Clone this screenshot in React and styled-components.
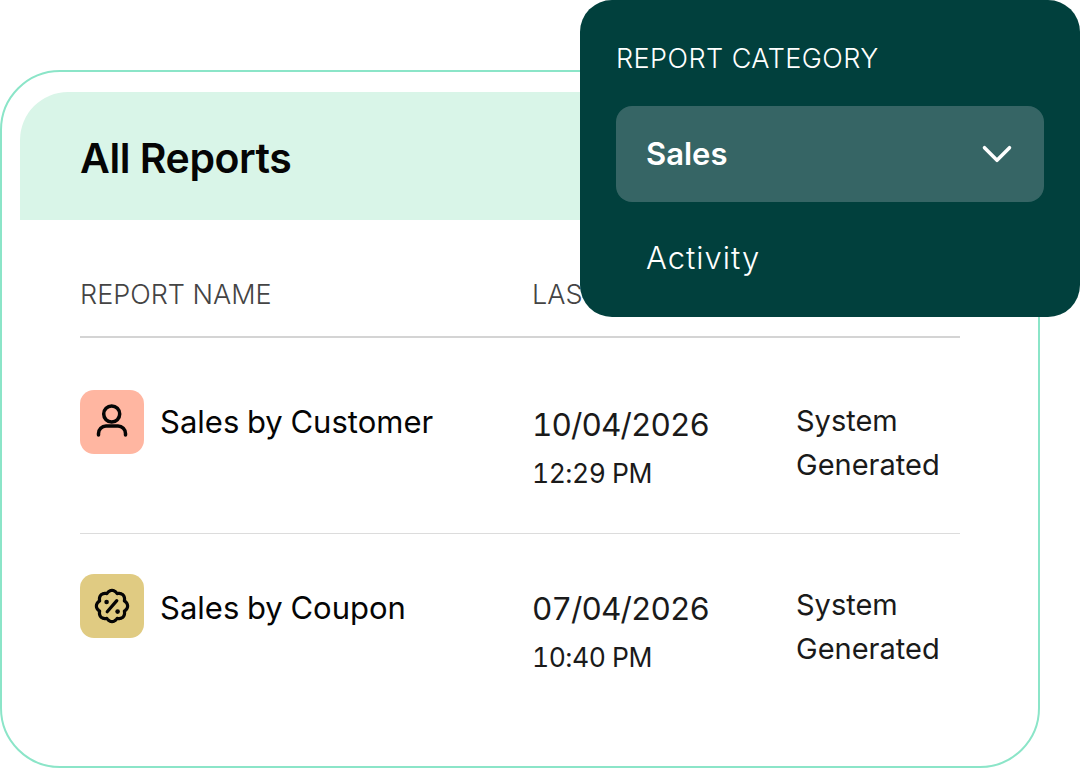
import React from "react";
import styled, { createGlobalStyle } from "styled-components";
import { ChevronDown } from "lucide-react";

const GlobalStyle = createGlobalStyle`
  html, body {
    margin: 0;
    padding: 0;
    background: #fff;
    font-family: Inter, "Open Sans", sans-serif;
    overflow: hidden;
  }
`;

const Page = styled.div`
  position: relative;
  width: 1080px;
  height: 768px;
  padding-top: 70px;
  box-sizing: border-box;
`;
const Card = styled.div`
  width: 1040px;
  height: 698px;
  box-sizing: border-box;
  border: 2px solid #8be5c8;
  border-radius: 60px;
  padding: 20px 18px 0;
`;
const Header = styled.div`
  height: 128px;
  box-sizing: border-box;
  display: flex;
  align-items: center;
  padding: 3px 0 0 60px;
  background: #d9f5e8;
  border-radius: 48px 48px 0 0;
`;
const Title = styled.div`
  font-size: 41px;
  font-weight: 600;
  letter-spacing: -0.45px;
  color: #050505;
`;
const Table = styled.div`
  margin: 0 60px;
`;
const Columns = styled.div`
  display: grid;
  grid-template-columns: 452px 264px 1fr;
`;
const HeadRow = styled(Columns)`
  height: 118px;
  align-items: center;
  box-sizing: border-box;
  padding-top: 32px;
  border-bottom: 2px solid #d4d4d4;
`;
const HeadCell = styled.div`
  font-size: 27px;
  font-weight: 300;
  color: #444;
  white-space: nowrap;
`;
const Row = styled(Columns)`
  height: 196px;
  box-sizing: border-box;
  padding-top: ${(p) => (p.$last ? "40px" : "52px")};
  border-bottom: ${(p) => (p.$last ? "none" : "1px solid #dcdcdc")};
`;
const NameCell = styled.div`
  display: flex;
  align-items: flex-start;
  gap: 16px;
`;
const IconTile = styled.div`
  width: 64px;
  height: 64px;
  display: flex;
  align-items: center;
  justify-content: center;
  border-radius: 14px;
  background: ${(p) => p.$bg};
  color: #050505;
`;
const ReportName = styled.div`
  padding-top: ${(p) => (p.$last ? "2px" : "0")};
  font-size: 31px;
  font-weight: 400;
  word-spacing: -1px;
  line-height: 64px;
  color: #050505;
  white-space: nowrap;
`;
const DateCell = styled.div`
  padding-top: 13px;
  color: #1a1a1a;
  font-variant-numeric: tabular-nums;
`;
const DateText = styled.div`
  font-size: 31.5px;
  font-weight: 400;
  letter-spacing: -0.9px;
  line-height: 44px;
  white-space: nowrap;
`;
const TimeText = styled.div`
  font-size: 26.5px;
  font-weight: 400;
  letter-spacing: -0.5px;
  line-height: 40px;
  margin-top: 6px;
  white-space: nowrap;
`;
const OwnerCell = styled.div`
  padding-top: 9px;
  font-size: 29px;
  font-weight: 400;
  line-height: 44px;
  color: #1a1a1a;
`;
const Panel = styled.div`
  position: absolute;
  top: 0;
  right: 0;
  width: 500px;
  height: 317px;
  box-sizing: border-box;
  padding: 42px 36px 0;
  background: #01403d;
  border-radius: 32px;
  color: #fff;
`;
const PanelLabel = styled.div`
  font-size: 27px;
  font-weight: 300;
  line-height: 34px;
  letter-spacing: 0.45px;
  white-space: nowrap;
`;
const Select = styled.div`
  margin-top: 30px;
  height: 96px;
  display: flex;
  align-items: center;
  justify-content: space-between;
  padding: 0 22px 0 30px;
  background: #366565;
  border-radius: 16px;
`;
const Selected = styled.div`
  font-size: 31px;
  font-weight: 600;
  line-height: 36px;
`;
const Option = styled.div`
  margin-top: 34px;
  padding-left: 30px;
  font-size: 31px;
  font-weight: 300;
  letter-spacing: 1px;
  line-height: 44px;
`;

const PersonIcon = () => (
  <svg width="40" height="40" viewBox="0 0 40 40" fill="none" stroke="currentColor" strokeWidth="3.5" strokeLinecap="round">
    <circle cx="19.7" cy="12" r="8" />
    <path d="M6.5 33v-1.5a7.5 7.5 0 0 1 7.5-7.5h12a7.5 7.5 0 0 1 7.5 7.5V33" />
  </svg>
);

// scalloped badge outline, 8 round lobes with pinched valleys
const badgePath = Array.from({ length: 96 }, (_, i) => {
  const angle = (i / 96) * Math.PI * 2;
  const r = 13.4 + 2.2 * Math.abs(Math.cos(angle * 4));
  const x = 20 + r * Math.sin(angle);
  const y = 20 - r * Math.cos(angle);
  return `${i === 0 ? "M" : "L"}${x.toFixed(2)} ${y.toFixed(2)}`;
}).join(" ");

const CouponIcon = () => (
  <svg width="40" height="40" viewBox="0 0 40 40" fill="none" stroke="currentColor" strokeWidth="3.2" strokeLinecap="round" strokeLinejoin="round">
    <path d={`${badgePath} Z`} />
    <path d="M15.2 25.8 24.8 14.6" />
    <circle cx="14.6" cy="16" r="2.3" fill="currentColor" stroke="none" />
    <circle cx="25.6" cy="25.6" r="2.3" fill="currentColor" stroke="none" />
  </svg>
);

const reports = [
  { name: "Sales by Customer", date: "10/04/2026", time: "12:29 PM", bg: "#ffb6a1", icon: <PersonIcon /> },
  { name: "Sales by Coupon", date: "07/04/2026", time: "10:40 PM", bg: "#e0cb82", icon: <CouponIcon /> },
];

const App = () => {
  return (
    <Page>
      <GlobalStyle />
      <Card>
        <Header>
          <Title>All Reports</Title>
        </Header>
        <Table>
          <HeadRow>
            <HeadCell>REPORT NAME</HeadCell>
            <HeadCell>LAST ACCESSED</HeadCell>
            <HeadCell />
          </HeadRow>
          {reports.map((report, i) => {
            const last = i === reports.length - 1;
            return (
              <Row key={report.name} $last={last}>
                <NameCell>
                  <IconTile $bg={report.bg}>{report.icon}</IconTile>
                  <ReportName $last={last}>{report.name}</ReportName>
                </NameCell>
                <DateCell>
                  <DateText>{report.date}</DateText>
                  <TimeText>{report.time}</TimeText>
                </DateCell>
                <OwnerCell>
                  System
                  <br />
                  Generated
                </OwnerCell>
              </Row>
            );
          })}
        </Table>
      </Card>
      <Panel>
        <PanelLabel>REPORT CATEGORY</PanelLabel>
        <Select>
          <Selected>Sales</Selected>
          <ChevronDown size={50} strokeWidth={1.7} />
        </Select>
        <Option>Activity</Option>
      </Panel>
    </Page>
  );
};

export default App;
